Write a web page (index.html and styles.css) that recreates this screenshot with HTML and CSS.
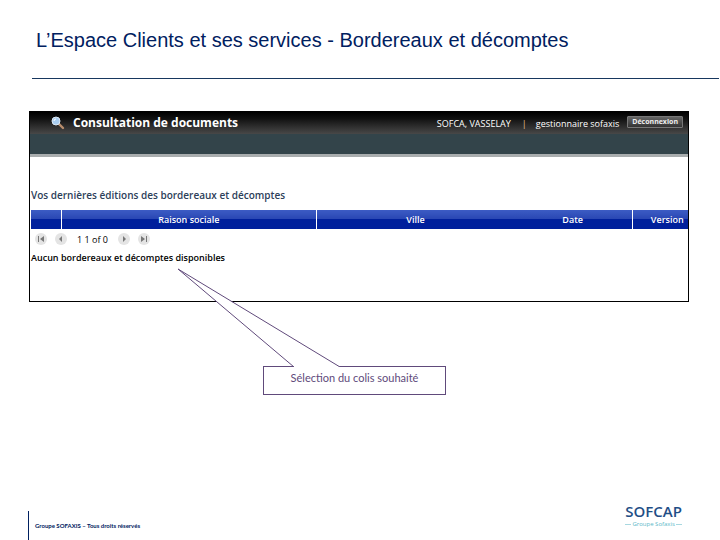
FILE: index.html
```html
<!DOCTYPE html>
<html lang="fr">
<head>
  <meta charset="UTF-8">
  <meta name="viewport" content="width=device-width, initial-scale=1.0">
  <title>L’Espace Clients et ses services</title>
  <link rel="stylesheet" href="styles.css">
</head>
<body>

  <header class="title">
    <h1>L’Espace Clients et ses services - Bordereaux et décomptes</h1>
  </header>

  <main>
    <section class="window">
      <div class="topbar">
        <svg class="search" viewBox="0 0 14 14" width="14" height="14" aria-hidden="true">
          <path d="M8 8l4 4" stroke="#b98d6c" stroke-width="2.4" stroke-linecap="round"/>
          <circle cx="5" cy="5" r="4" fill="#a9cdf0" stroke="#dce8f4"/>
          <path d="M3 5a2 2 0 0 1 2-2" stroke="#fff" fill="none"/>
        </svg>
        <h2>Consultation de documents</h2>
        <span class="client">SOFCA, VASSELAY</span>
        <span class="separator">|</span>
        <span class="account">gestionnaire sofaxis</span>
        <button class="logout" type="button">Déconnexion</button>
      </div>
      <div class="menu"></div>

      <div class="content">
        <h3>Vos dernières éditions des bordereaux et décomptes</h3>
        <table>
          <colgroup>
            <col class="col-select">
            <col class="col-name">
            <col class="col-city">
            <col class="col-date">
            <col class="col-version">
          </colgroup>
          <thead>
            <tr>
              <th></th>
              <th>Raison sociale</th>
              <th class="open">Ville</th>
              <th>Date</th>
              <th class="open last">Version</th>
            </tr>
          </thead>
        </table>
        <div class="pager">
          <button type="button" aria-label="Première page">
            <svg viewBox="0 0 12 12" width="12" height="12"><path d="M3 3h1v6H3zM9 3v6L5 6z"/></svg>
          </button>
          <button type="button" aria-label="Page précédente">
            <svg viewBox="0 0 12 12" width="12" height="12"><path d="M7 3v6L4 6z"/></svg>
          </button>
          <span>1 1 of 0</span>
          <button type="button" aria-label="Page suivante">
            <svg viewBox="0 0 12 12" width="12" height="12"><path d="M5 3v6l3-3z"/></svg>
          </button>
          <button type="button" aria-label="Dernière page">
            <svg viewBox="0 0 12 12" width="12" height="12"><path d="M8 3h1v6H8zM3 3v6l4-3z"/></svg>
          </button>
        </div>
        <p class="empty">Aucun bordereaux et décomptes disponibles</p>
      </div>
    </section>

    <div class="callout">
      <svg class="pointer" viewBox="0 0 164 99" width="164" height="99" aria-hidden="true">
        <path d="M117 99L1 1L163 99" fill="#fff" stroke="#604a7b"/>
      </svg>
      Sélection du colis souhaité
    </div>
  </main>

  <footer>
    <p class="rights">Groupe SOFAXIS – Tous droits réservés</p>
    <div class="logo">
      <span class="brand">SOFCAP</span>
      <span class="group">Groupe Sofaxis</span>
    </div>
  </footer>

</body>
</html>
```

FILE: styles.css
```css
* {
  box-sizing: border-box;
}

body {
  display: flex;
  flex-direction: column;
  min-height: 100vh;
  margin: 0;
  background-color: white;
  font-family: "Open Sans", "Noto Sans", sans-serif;
}

h1, h2, h3, p {
  margin: 0;
}

.title {
  margin: 0 1px 0 32px;
  padding: 28px 4px 26px;
  border-bottom: 1px solid #17375e;
}

.title h1 {
  color: #002060;
  font: 20px/24px "Liberation Sans", Arial, sans-serif;
}

main {
  flex: 1;
  padding: 32px 31px 0 29px;
}

.window {
  height: 191px;
  border: 1px solid black;
}

.topbar {
  display: flex;
  align-items: center;
  height: 22px;
  padding: 0 5px 0 21px;
  background: linear-gradient(#000, #111 30%, #484848);
  color: white;
  font-size: 9px;
}

.topbar h2 {
  flex: 1;
  margin-left: 8px;
  font: bold 12px/20px "Open Sans", sans-serif;
}

.separator {
  margin: 0 9px 0 11px;
  color: #e8c890;
}

.logout {
  height: 12px;
  margin: 0 0 2px 8px;
  padding: 0 4px;
  border: 1px solid #777;
  border-radius: 1px;
  background: linear-gradient(#666, #333);
  color: #eee;
  font: bold 7px/10px "Open Sans", sans-serif;
}

.menu {
  height: 23px;
  border-bottom: 3px solid #a9adae;
  background-color: #33444a;
}

.content {
  padding: 30px 0 0 1px;
}

.content h3 {
  color: #2c4059;
  font-size: 10px;
  font-weight: 600;
  line-height: 16px;
}

table {
  width: 100%;
  margin-top: 7px;
  border-collapse: collapse;
  table-layout: fixed;
}

.col-select {
  width: 30px;
}

.col-city {
  width: 30%;
}

.col-date {
  width: 18%;
}

.col-version {
  width: 56px;
}

th {
  height: 19px;
  padding: 0;
  border-right: 1px solid white;
  background: linear-gradient(#3c5cc4, #2a48b4 45%, #00209c 50%, #00209c);
  color: white;
  font-size: 9px;
  font-weight: 600;
  line-height: 19px;
}

.open {
  border-right: 0;
}

.last {
  padding-left: 14px;
}

.pager {
  display: flex;
  align-items: center;
  height: 20px;
  padding-left: 4px;
  font-size: 9px;
}

.pager button {
  display: flex;
  margin-right: 8px;
  padding: 0;
  border: 0;
  border-radius: 50%;
  background-color: #e4e4e4;
}

.pager path {
  fill: #777;
}

.pager span {
  margin: 0 10px 0 2px;
}

.empty {
  font-size: 9px;
  font-weight: 600;
  line-height: 18px;
}

.callout {
  position: relative;
  width: 183px;
  margin: 64px 0 0 234px;
  padding: 2px 0 8px;
  border: 1px solid #604a7b;
  color: #604a7b;
  font: 11px/17px Lato, sans-serif;
  text-align: center;
}

/* the pointer opens the top edge of the box */
.pointer {
  position: absolute;
  left: -87px;
  bottom: 100%;
}

footer {
  display: flex;
  justify-content: space-between;
  margin-left: 28px;
  padding-right: 38px;
}

.rights {
  align-self: flex-end;
  height: 29px;
  padding-left: 6px;
  border-left: 1px solid #002060;
  color: #002060;
  font: bold 6px/30px Lato, sans-serif;
}

.logo {
  display: flex;
  flex-direction: column;
  align-items: center;
  height: 38px;
  color: #1f4e86;
}

.brand {
  font: 600 15px/18px "Open Sans", sans-serif;
}

.group {
  display: flex;
  align-items: center;
  gap: 1px;
  color: #5cb8c8;
  font-size: 6px;
  line-height: 8px;
}

.group::before, .group::after {
  content: "";
  width: 6px;
  height: 1px;
  background-color: #a8d8e0;
}
```
